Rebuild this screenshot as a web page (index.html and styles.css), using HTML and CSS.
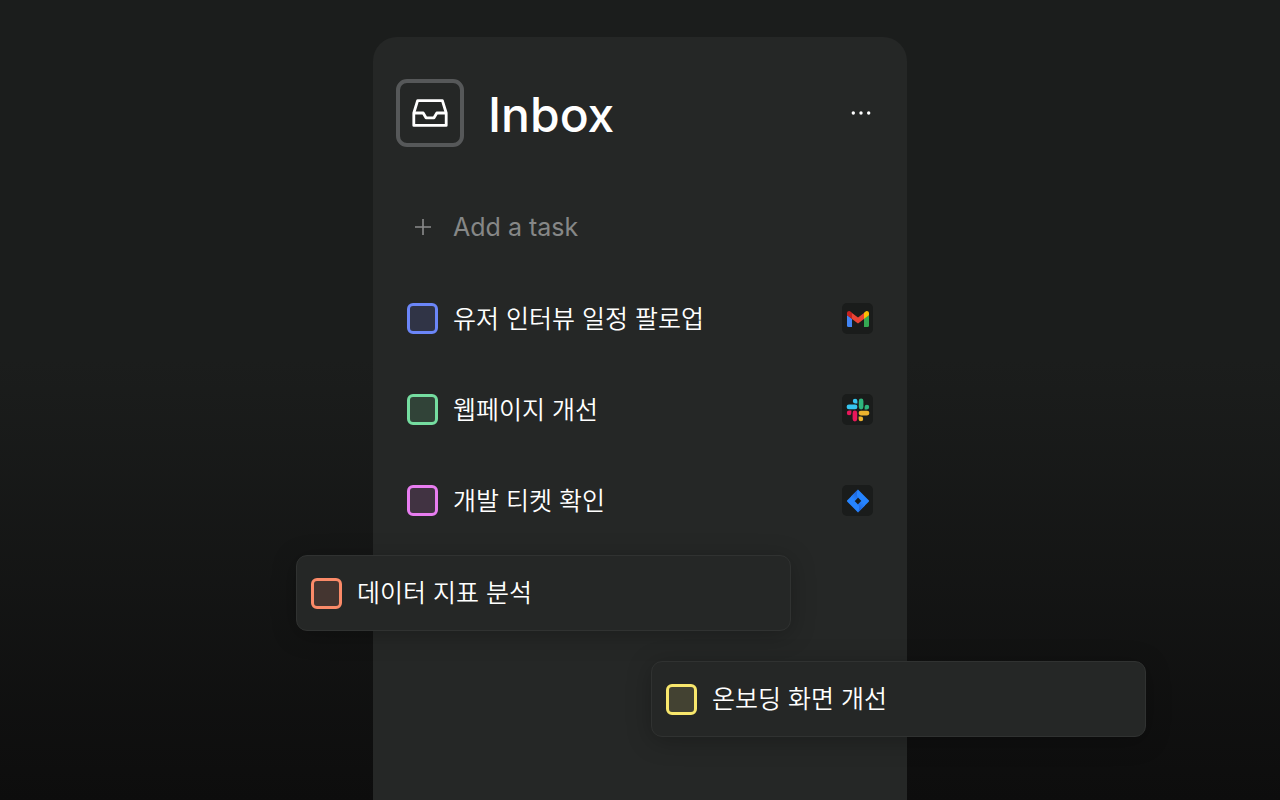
FILE: index.html
```
<!DOCTYPE html>
<html lang="ko">
<head>
    <meta charset="UTF-8">
    <title>Inbox</title>
    <meta name="viewport" content="width=device-width, initial-scale=1.0">
    <link rel="stylesheet" href="styles.css">
</head>
<body>
<main class="inbox">
    <header class="inbox-header">
        <div class="inbox-icon">
            <svg viewBox="0 0 36 28" width="36" height="28" fill="none" stroke="#fff" stroke-width="2.8" stroke-linejoin="round">
                <path d="M5.6 1.6H30.4L34.2 14V26.4H1.8V14Z"/>
                <path d="M1.8 14H11.2L14 18.8H22L24.8 14H34.2"/>
            </svg>
        </div>
        <h1>Inbox</h1>
        <button class="more" type="button" aria-label="More">
            <svg viewBox="0 0 20 6" width="20" height="6" fill="#fff">
                <circle cx="2.3" cy="3" r="1.7"/>
                <circle cx="10" cy="3" r="1.7"/>
                <circle cx="17.7" cy="3" r="1.7"/>
            </svg>
        </button>
    </header>

    <form class="task add-task">
        <button class="add" type="button" aria-label="Add">
            <svg viewBox="0 0 16 16" width="16" height="16" fill="none" stroke="#8b8c8c" stroke-width="1.6">
                <path d="M8 0V16M0 8H16"/>
            </svg>
        </button>
        <input class="add-input" type="text" placeholder="Add a task" aria-label="Add a task">
    </form>

    <ul class="tasks">
        <li class="task">
            <input class="check blue" type="checkbox" id="task1">
            <label for="task1">유저 인터뷰 일정 팔로업</label>
            <span class="app">
                <svg viewBox="0 0 22 16" width="22" height="16">
                    <path fill="#4285f4" d="M0 4L5 7.7V16H1.5Q0 16 0 14.5Z"/>
                    <path fill="#34a853" d="M17 7.7L22 4V14.5Q22 16 20.5 16H17Z"/>
                    <path fill="#ea4335" d="M5 2L11 6.5L17 2V8L11 12.4L5 8Z"/>
                    <path fill="#c5221f" d="M0 2.3C0 0 2.5-.6 4 .9L5 1.8V8L0 4.3Z"/>
                    <path fill="#fbbc04" d="M22 2.3C22 0 19.5-.6 18 .9L17 1.8V8L22 4.3Z"/>
                </svg>
            </span>
        </li>
        <li class="task">
            <input class="check green" type="checkbox" id="task2">
            <label for="task2">웹페이지 개선</label>
            <span class="app">
                <svg viewBox="0 0 24 24" width="24" height="24">
                    <g fill="#36c5f0">
                        <rect x=".6" y="6.6" width="10.8" height="4.6" rx="2.3"/>
                        <path d="M11.4 5.4H9.1A2.3 2.3 0 1 1 11.4 3.1Z"/>
                    </g>
                    <g fill="#2eb67d">
                        <rect x="12.8" y=".6" width="4.6" height="10.8" rx="2.3"/>
                        <path d="M18.6 11.4V9.1A2.3 2.3 0 1 1 20.9 11.4Z"/>
                    </g>
                    <g fill="#ecb22e">
                        <rect x="12.6" y="12.8" width="10.8" height="4.6" rx="2.3"/>
                        <path d="M12.6 18.6H14.9A2.3 2.3 0 1 1 12.6 20.9Z"/>
                    </g>
                    <g fill="#e9175a">
                        <rect x="6.6" y="12.6" width="4.6" height="10.8" rx="2.3"/>
                        <path d="M5.4 12.6V14.9A2.3 2.3 0 1 1 3.1 12.6Z"/>
                    </g>
                </svg>
            </span>
        </li>
        <li class="task">
            <input class="check pink" type="checkbox" id="task3">
            <label for="task3">개발 티켓 확인</label>
            <span class="app">
                <svg viewBox="0 0 24 24" width="24" height="24">
                    <defs>
                        <linearGradient id="jira-top" x1="12" y1="3" x2="6" y2="10" gradientUnits="userSpaceOnUse">
                            <stop offset="0.2" stop-color="#1f66dd"/>
                            <stop offset="1" stop-color="#2684ff"/>
                        </linearGradient>
                        <linearGradient id="jira-bottom" x1="12" y1="21" x2="18" y2="14" gradientUnits="userSpaceOnUse">
                            <stop offset="0.2" stop-color="#1f66dd"/>
                            <stop offset="1" stop-color="#2684ff"/>
                        </linearGradient>
                    </defs>
                    <path fill="#2684ff" fill-rule="evenodd" d="M12 .6L22.7 11.3Q23.4 12 22.7 12.7L12 23.4L1.3 12.7Q.6 12 1.3 11.3ZM12 8.6L8.6 12L12 15.4L15.4 12Z"/>
                    <path fill="url(#jira-top)" d="M12 8.6Q9.6 6 12 .6L5 7.6L8.9 11.7Z"/>
                    <path fill="url(#jira-bottom)" d="M12 23.4Q14.4 18 12 15.4L15.1 12.3L19 16.4Z"/>
                </svg>
            </span>
        </li>
    </ul>

    <!-- cards being dragged over the list -->
    <div class="task card card-left">
        <input class="check orange" type="checkbox" id="task4">
        <label for="task4">데이터 지표 분석</label>
    </div>
    <div class="task card card-right">
        <input class="check yellow" type="checkbox" id="task5">
        <label for="task5">온보딩 화면 개선</label>
    </div>
</main>
</body>
</html>
```
FILE: styles.css
```
* {
    box-sizing: border-box;
}
body {
    margin: 0;
    min-height: 100vh;
    padding-top: 37px;
    display: flex;
    justify-content: center;
    background: linear-gradient(#1b1d1c 0%, #1b1d1c 45%, #0d0d0d 100%);
    color: #fff;
    font-family: Inter, "Noto Sans CJK KR", sans-serif;
    overflow-x: hidden;
}
button {
    display: flex;
    align-items: center;
    justify-content: center;
    padding: 0;
    border: 0;
    background: none;
    cursor: pointer;
}
.inbox {
    position: relative;
    width: 100%;
    max-width: 534px;
    padding: 42px 34px 0;
    background-color: #252726;
    border-radius: 24px 24px 0 0;
}
.inbox-header {
    display: flex;
    align-items: center;
    gap: 24px;
    margin-left: -11px;
    margin-bottom: 64px;
}
.inbox-icon {
    display: flex;
    align-items: center;
    justify-content: center;
    width: 68px;
    height: 68px;
    border: 4px solid #565859;
    border-radius: 11px;
}
h1 {
    margin: 0;
    padding-top: 3px;
    font-size: 48px;
    font-weight: 500;
    line-height: 60px;
}
.more {
    width: 24px;
    height: 24px;
    margin-left: auto;
}
.tasks {
    margin: 61px 0 0;
    padding: 0;
    list-style: none;
    display: grid;
    gap: 60px;
}
.task {
    display: flex;
    align-items: center;
    gap: 15px;
    height: 31px;
}
.task label {
    padding-bottom: 3px;
    font-family: "Noto Sans CJK KR", sans-serif;
    font-size: 25px;
    font-weight: 350;
    line-height: 31px;
    cursor: pointer;
}
.add {
    width: 31px;
    height: 31px;
}
.add-input {
    flex: 1;
    min-width: 0;
    padding: 1px 0 0;
    border: 0;
    outline: 0;
    background: none;
    color: #fff;
    font-family: inherit;
    font-size: 25px;
}
.add-input::placeholder {
    color: #868787;
}
.check {
    appearance: none;
    flex: none;
    width: 31px;
    height: 31px;
    margin: 0;
    border: 3px solid;
    border-radius: 6px;
    cursor: pointer;
}
.blue {
    border-color: #6b86f8;
    background-color: #303446;
}
.green {
    border-color: #75dda0;
    background-color: #314338;
}
.pink {
    border-color: #e87df0;
    background-color: #413342;
}
.orange {
    border-color: #fb8a68;
    background-color: #443530;
}
.yellow {
    border-color: #f8e76c;
    background-color: #434232;
}
.app {
    display: flex;
    align-items: center;
    justify-content: center;
    width: 31px;
    height: 31px;
    margin-left: auto;
    background-color: #1a1c1b;
    border-radius: 5px;
}
.card {
    position: absolute;
    width: 495px;
    height: 76px;
    padding: 0 14px;
    background-color: #252726;
    border: 1px solid #303231;
    border-radius: 11px;
    box-shadow: 0 4px 24px rgba(0, 0, 0, 0.25);
}
.card-left {
    top: 518px;
    left: -77px;
}
.card-right {
    top: 624px;
    left: 278px;
}
```
